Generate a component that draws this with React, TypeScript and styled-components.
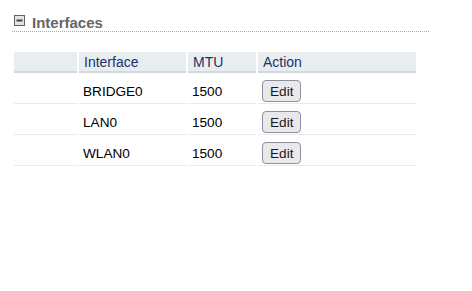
import React from "react";
import styled, { createGlobalStyle } from "styled-components";

const GlobalStyle = createGlobalStyle`
  html, body {
    margin: 0;
    padding: 0;
    background: #ffffff;
  }
  body {
    font-family: "Liberation Sans", Arial, sans-serif;
  }
`;

const Page = styled.div`
  padding: 10px 0 0 12px;
  width: 417px;
`;

const SectionHead = styled.div`
  display: flex;
  align-items: center;
  gap: 7px;
  height: 21px;
  padding-left: 2px;
  border-bottom: 1px dotted #a8a8a8;
`;

const Title = styled.h2`
  margin: 0;
  padding-top: 4px;
  font-size: 15px;
  font-weight: bold;
  color: #666666;
  line-height: 18px;
`;

const Grid = styled.div`
  display: grid;
  grid-template-columns: 63px 107px 68px 158px;
  column-gap: 2px;
  margin: 20px 0 0 2px;
  width: 402px;
`;

const HeadCell = styled.div`
  height: 21px;
  box-sizing: border-box;
  padding: 0 5px;
  display: flex;
  align-items: center;
  background: #e8eef0;
  border-bottom: 2px solid #d2d8de;
  color: #1d2f6a;
  font-size: 14px;
`;

const Cell = styled.div`
  height: 31px;
  box-sizing: border-box;
  padding: 7px 4px 1px;
  display: flex;
  align-items: center;
  border-bottom: 1px solid #e6eded;
  color: #000000;
  font-size: 13.6px;
`;

const EditButton = styled.button`
  height: 22px;
  padding: 0 7px;
  border: 1px solid #8f8f9d;
  border-radius: 4px;
  background: #e9e9ed;
  color: #1b1b1b;
  font-family: "Liberation Sans", Arial, sans-serif;
  font-size: 13.6px;
  cursor: pointer;
`;

const CollapseIcon = () => (
  <svg width="11" height="11" viewBox="0 0 11 11">
    <rect x="0.5" y="0.5" width="10" height="10" fill="#e4e4e4" stroke="#606060" />
    <rect x="2.5" y="4.5" width="6" height="2" fill="#404040" />
  </svg>
);

const interfaces = [
  { name: "BRIDGE0", mtu: 1500 },
  { name: "LAN0", mtu: 1500 },
  { name: "WLAN0", mtu: 1500 },
];

export default function App() {
  return (
    <>
      <GlobalStyle />
      <Page>
        <SectionHead>
          <CollapseIcon />
          <Title>Interfaces</Title>
        </SectionHead>
        <Grid>
          <HeadCell />
          <HeadCell>Interface</HeadCell>
          <HeadCell>MTU</HeadCell>
          <HeadCell>Action</HeadCell>
          {interfaces.map((i) => (
            <React.Fragment key={i.name}>
              <Cell />
              <Cell>{i.name}</Cell>
              <Cell>{i.mtu}</Cell>
              <Cell>
                <EditButton>Edit</EditButton>
              </Cell>
            </React.Fragment>
          ))}
        </Grid>
      </Page>
    </>
  );
}
